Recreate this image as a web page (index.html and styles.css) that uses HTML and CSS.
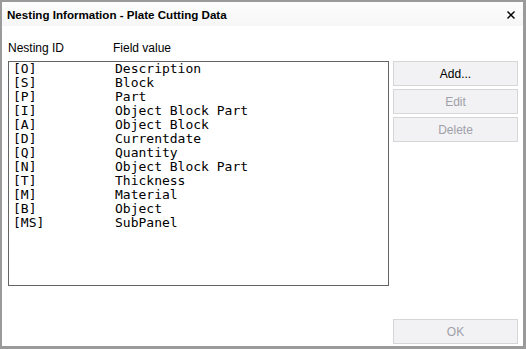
FILE: index.html
```html
<!DOCTYPE html>
<html lang="en">
<head>
    <meta charset="UTF-8">
    <title>Nesting Information - Plate Cutting Data</title>
    <link rel="stylesheet" href="styles.css">
</head>
<body>
    <div class="window">
        <div class="titlebar">
            <span class="title">Nesting Information - Plate Cutting Data</span>
            <span class="close">
                <svg width="10" height="10" viewBox="0 0 10 10">
                    <path d="M1.5 1.5 L8.5 8.5 M8.5 1.5 L1.5 8.5" stroke="#000" stroke-width="1.4" fill="none"/>
                </svg>
            </span>
        </div>
        <div class="content">
            <div class="headers">
                <span class="col-id">Nesting ID</span>
                <span>Field value</span>
            </div>
            <div class="list">
                <div class="row"><span class="id">[O]</span><span>Description</span></div>
                <div class="row"><span class="id">[S]</span><span>Block</span></div>
                <div class="row"><span class="id">[P]</span><span>Part</span></div>
                <div class="row"><span class="id">[I]</span><span>Object Block Part</span></div>
                <div class="row"><span class="id">[A]</span><span>Object Block</span></div>
                <div class="row"><span class="id">[D]</span><span>Currentdate</span></div>
                <div class="row"><span class="id">[Q]</span><span>Quantity</span></div>
                <div class="row"><span class="id">[N]</span><span>Object Block Part</span></div>
                <div class="row"><span class="id">[T]</span><span>Thickness</span></div>
                <div class="row"><span class="id">[M]</span><span>Material</span></div>
                <div class="row"><span class="id">[B]</span><span>Object</span></div>
                <div class="row"><span class="id">[MS]</span><span>SubPanel</span></div>
            </div>
            <div class="buttons">
                <button class="btn">Add...</button>
                <button class="btn" disabled>Edit</button>
                <button class="btn" disabled>Delete</button>
            </div>
            <div class="footer">
                <button class="btn" disabled>OK</button>
            </div>
        </div>
    </div>
</body>
</html>
```

FILE: styles.css
```css
body {
    margin: 0;
    padding: 0;
    background-color: #fff;
    font-family: 'Liberation Sans', Arial, sans-serif;
    font-size: 12px;
    color: #000;
}

.window {
    width: 526px;
    height: 349px;
    box-sizing: border-box;
    border: 2px solid #9a9a9a;
    border-right-width: 3px;
    border-bottom-width: 3px;
    background-color: #fff;
    display: flex;
    flex-direction: column;
}

.titlebar {
    height: 24px;
    display: flex;
    align-items: center;
    justify-content: space-between;
    padding: 0 7px 0 5px;
    background: linear-gradient(#fdfdfd, #f6f6f6);
}

.title {
    font-weight: bold;
    font-size: 11.6px;
}

.close {
    display: flex;
    margin-top: 1px;
}

.content {
    flex: 1;
    display: grid;
    grid-template-columns: 381px 125px;
    grid-template-rows: 35px 225px auto;
    column-gap: 4px;
    padding-left: 6px;
}

.headers {
    grid-column: 1;
    grid-row: 1;
    padding-top: 15px;
    line-height: 14px;
    display: flex;
}

.col-id {
    width: 105px;
}

.list {
    grid-column: 1;
    grid-row: 2;
    box-sizing: border-box;
    border: 1px solid #646464;
    padding-left: 4px;
    font-family: 'DejaVu Sans Mono', 'Liberation Mono', monospace;
    font-size: 13px;
    line-height: 14px;
}

.row {
    display: flex;
}

.row .id {
    width: 102px;
}

.buttons {
    grid-column: 2;
    grid-row: 2;
    display: flex;
    flex-direction: column;
    gap: 3px;
}

.btn {
    height: 25px;
    width: 125px;
    box-sizing: border-box;
    border: 1px solid #d6d6d6;
    background-color: #f2f2f4;
    font-family: 'Liberation Sans', Arial, sans-serif;
    font-size: 12px;
    color: #000;
    padding: 0;
}

.btn:disabled {
    color: #a0a0a8;
}

.footer {
    grid-column: 2;
    grid-row: 3;
    margin-top: 33px;
}
```
